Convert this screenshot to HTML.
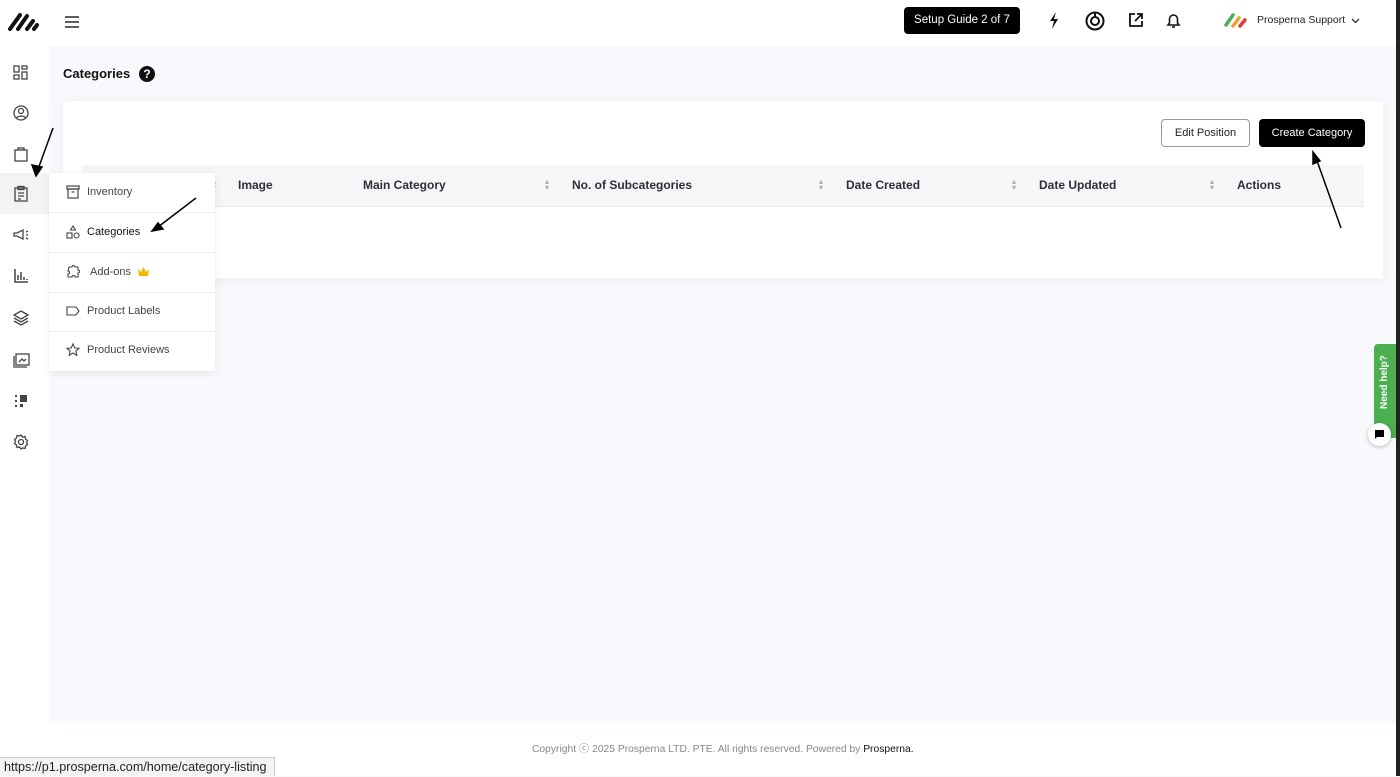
<!DOCTYPE html>
<html><head><meta charset="utf-8"><style>
*{box-sizing:border-box;margin:0;padding:0}
body{width:1400px;height:776px;overflow:hidden;background:#f8f9fc;font-family:"Liberation Sans",sans-serif;position:relative;color:#222}
.a{position:absolute}
.side{left:0;top:0;width:49px;height:776px;background:#fff}
.top{left:49px;top:0;width:1347px;height:46px;background:#fff}
.ic{position:absolute;left:12px;width:18px;height:18px}
svg{overflow:visible}
.card{left:63px;top:101px;width:1320px;height:177px;background:#fff;box-shadow:0 2px 12px rgba(0,0,0,.06)}
.th{left:82px;top:165px;width:1282px;height:42px;background:#f5f6f7;border-bottom:1px solid #e8e8e8}
.th span{position:absolute;top:13px;font-size:12px;font-weight:bold;color:#2b2f36}
.sort{position:absolute;top:14px;font-size:8px;color:#aaa;line-height:6px}
.menu{left:49px;top:173px;width:166px;height:198px;background:#fff;box-shadow:0 2px 8px rgba(0,0,0,.08)}
.mi{position:absolute;left:0;width:166px;height:40px;border-bottom:1px solid #eee;font-size:11px;color:#444}
.mi span{position:absolute;left:38px;top:13px}
.mi svg{position:absolute;left:17px;top:12px}
</style></head><body>
<div class="a side"></div>
<div class="a" style="left:0;top:173px;width:49px;height:41px;background:#f3f3f3"></div>
<div class="a top"></div>
<div class="a" style="left:1396px;top:0;width:4px;height:776px;background:#222"></div>
<svg class="a" style="left:8px;top:12px" width="30" height="20"><g stroke="#111" stroke-width="4" stroke-linecap="round"><line x1="2" y1="17" x2="12" y2="3"/><line x1="10" y1="17" x2="19" y2="4"/><line x1="19" y1="17" x2="25" y2="9"/><line x1="26" y1="17" x2="29" y2="13"/></g></svg>
<svg class="a" style="left:65px;top:16px" width="14" height="12"><g stroke="#333" stroke-width="1.6"><line x1="0" y1="1" x2="14" y2="1"/><line x1="0" y1="6" x2="14" y2="6"/><line x1="0" y1="11" x2="14" y2="11"/></g></svg>
<svg class="ic" style="top:64px" viewBox="0 0 18 18" fill="none" stroke="#444" stroke-width="1.3"><rect x="2" y="2" width="5" height="6"/><rect x="10" y="2" width="5" height="3"/><rect x="2" y="11" width="5" height="4"/><rect x="10" y="8" width="5" height="7"/></svg>
<svg class="ic" style="top:104px" viewBox="0 0 18 18" fill="none" stroke="#444" stroke-width="1.3"><circle cx="9" cy="9" r="7"/><circle cx="9" cy="7" r="2.5"/><path d="M4.5 14c1-2.5 8-2.5 9 0"/></svg>
<svg class="ic" style="top:145px" viewBox="0 0 18 18" fill="none" stroke="#444" stroke-width="1.3"><rect x="3" y="5" width="12" height="11"/><path d="M6 5V3h6v2"/></svg>
<svg class="ic" style="top:185px" viewBox="0 0 18 18" fill="none" stroke="#444" stroke-width="1.3"><rect x="3" y="3" width="12" height="13"/><rect x="6" y="1.5" width="6" height="3"/><path d="M6 8h6M6 11h6M6 14h3"/></svg>
<svg class="ic" style="top:226px" viewBox="0 0 18 18" fill="none" stroke="#444" stroke-width="1.3"><path d="M2 7h3l6-3v9l-6-3H2z"/><path d="M14 6l2-1M14 9h2M14 12l2 1"/></svg>
<svg class="ic" style="top:267px" viewBox="0 0 18 18" fill="none" stroke="#444" stroke-width="1.5"><path d="M3 2v13h13M6 13V8M9 13V5M12 13v-3M15 13v-1"/></svg>
<svg class="ic" style="top:309px" viewBox="0 0 18 18" fill="none" stroke="#444" stroke-width="1.3"><path d="M9 2l7 4-7 4-7-4z"/><path d="M2 9l7 4 7-4M2 12l7 4 7-4"/></svg>
<svg class="ic" style="top:351px" viewBox="0 0 18 18" fill="none" stroke="#444" stroke-width="1.3"><rect x="4" y="3" width="13" height="11"/><path d="M2 5v11h13M7 11l3-3 2 2 2-2"/></svg>
<svg class="ic" style="top:392px" viewBox="0 0 18 18" fill="#444"><rect x="3" y="3" width="2" height="2"/><rect x="3" y="8" width="2" height="2"/><rect x="3" y="13" width="2" height="2"/><rect x="8" y="3" width="7" height="7"/><rect x="8" y="12" width="3" height="3"/></svg>
<svg class="ic" style="top:433px" viewBox="0 0 18 18" fill="none" stroke="#444" stroke-width="1.3"><circle cx="9" cy="9" r="2.5"/><path d="M9 2l1.5 2 2.5-.5.5 2.5 2 1.5-1 2 1 2-2 1.5-.5 2.5-2.5-.5L9 16l-1.5-2-2.5.5-.5-2.5-2-1.5 1-2-1-2 2-1.5.5-2.5 2.5.5z"/></svg>
<div class="a" style="left:904px;top:7px;width:116px;height:27px;background:#000;border-radius:4px;color:#fff;font-size:11.5px;text-align:center;line-height:27px">Setup Guide 2 of 7</div>
<svg class="a" style="left:1048px;top:12px" width="12" height="17"><path d="M8 0L2 9h4l-2 8 6-10H6z" fill="#111"/></svg>
<svg class="a" style="left:1085px;top:11px" width="20" height="20" fill="none" stroke="#111" stroke-width="2"><circle cx="10" cy="10" r="8.5"/><circle cx="10" cy="10" r="4"/><path d="M10 1.5v4.5"/></svg>
<svg class="a" style="left:1128px;top:12px" width="16" height="16" fill="none" stroke="#111" stroke-width="1.8"><path d="M7 2H2v12h12V9M9 2h5v5M14 2L7 9"/></svg>
<svg class="a" style="left:1166px;top:12px" width="15" height="17" fill="none" stroke="#111" stroke-width="1.6"><path d="M2 13h11l-1.5-2V7a4 4 0 0 0-8 0v4z"/><path d="M6 15h3"/></svg>
<svg class="a" style="left:1224px;top:12px" width="26" height="16" stroke-width="3.5" stroke-linecap="round"><line x1="2" y1="13" x2="9" y2="3" stroke="#4caf50"/><line x1="9" y1="14" x2="15" y2="6" stroke="#f0a030"/><line x1="16" y1="14" x2="21" y2="8" stroke="#e53935"/></svg>
<div class="a" style="left:1257px;top:14px;font-size:10.5px;color:#222">Prosperna Support</div>
<svg class="a" style="left:1351px;top:18px" width="9" height="6" fill="none" stroke="#333" stroke-width="1.3"><path d="M1 1l3.5 3.5L8 1"/></svg>
<div class="a" style="left:63px;top:66px;font-size:13px;font-weight:bold;color:#111">Categories</div>
<div class="a" style="left:139px;top:66px;width:16px;height:16px;border-radius:50%;background:#111;color:#fff;font-size:12px;font-weight:bold;text-align:center;line-height:16px">?</div>
<div class="a card"></div>
<div class="a" style="left:1161px;top:119px;width:89px;height:28px;border:1px solid #999;border-radius:4px;background:#fff;font-size:11px;text-align:center;line-height:26px;color:#222">Edit Position</div>
<div class="a" style="left:1259px;top:119px;width:106px;height:28px;border-radius:4px;background:#000;color:#fff;font-size:11px;text-align:center;line-height:28px">Create Category</div>
<div class="a th">
<div class="sort" style="left:130px">▴<br>▾</div>
<span style="left:156px">Image</span>
<span style="left:281px">Main Category</span><div class="sort" style="left:463px">▴<br>▾</div>
<span style="left:490px">No. of Subcategories</span><div class="sort" style="left:737px">▴<br>▾</div>
<span style="left:764px">Date Created</span><div class="sort" style="left:930px">▴<br>▾</div>
<span style="left:957px">Date Updated</span><div class="sort" style="left:1128px">▴<br>▾</div>
<span style="left:1155px">Actions</span>
</div>
<div class="a menu">
<div class="mi" style="top:0"><svg width="14" height="14" fill="none" stroke="#444" stroke-width="1.2"><rect x="1" y="1" width="12" height="3"/><rect x="2" y="4" width="10" height="9"/><path d="M5.5 7h3"/></svg><span>Inventory</span></div>
<div class="mi" style="top:40px"><svg width="14" height="14" fill="none" stroke="#444" stroke-width="1.1"><path d="M7 1l2.5 4h-5z"/><rect x="1" y="8" width="5" height="5"/><circle cx="10.5" cy="10.5" r="2.5"/></svg><span style="color:#111">Categories</span></div>
<div class="mi" style="top:80px"><svg width="14" height="14" fill="none" stroke="#444" stroke-width="1.1"><path d="M3 2h3a1.5 1.5 0 0 1 3 0h3v3a1.5 1.5 0 0 1 0 3v4H9a1.5 1.5 0 0 0-3 0H2V9a1.5 1.5 0 0 0 0-3z"/></svg><span style="left:41px">Add-ons</span><svg style="left:88px;top:13px" width="13" height="11"><path d="M1 3l3 3 2.5-5L9 6l3-3-1 7H2z" fill="#f5b800"/></svg></div>
<div class="mi" style="top:119px"><svg width="14" height="14" fill="none" stroke="#444" stroke-width="1.1"><path d="M1 3h9l3 4-3 4H1z"/></svg><span>Product Labels</span></div>
<div class="mi" style="top:158px;border:none"><svg width="14" height="14" fill="none" stroke="#444" stroke-width="1.1"><path d="M7 1l1.8 4 4.2.3-3.2 2.8 1 4.2L7 10l-3.8 2.3 1-4.2L1 5.3 5.2 5z"/></svg><span>Product Reviews</span></div>
</div>
<svg class="a" style="left:0;top:0" width="1400" height="776" fill="none" stroke="#000" stroke-width="1.5">
<line x1="53" y1="128" x2="37" y2="172"/><path d="M32 165l4 11 6-9z" fill="#000"/>
<line x1="196" y1="198" x2="158" y2="227"/><path d="M152 231l11-2-5-6z" fill="#000"/>
<line x1="1341" y1="228" x2="1316" y2="158"/><path d="M1313 152l0 12 7-3z" fill="#000"/>
</svg>
<div class="a" style="left:1374px;top:344px;width:22px;height:94px;background:#4caf50;border-radius:4px 0 0 4px"></div>
<div class="a" style="left:1366px;top:382px;width:40px;height:14px;transform:rotate(-90deg);color:#fff;font-size:10px;font-weight:bold;text-align:center;white-space:nowrap">Need help?</div>
<div class="a" style="left:1368px;top:423px;width:23px;height:23px;border-radius:50%;background:#fff;box-shadow:0 1px 4px rgba(0,0,0,.25)"></div>
<svg class="a" style="left:1375px;top:430px" width="10" height="10"><path d="M0 0h9v7H2L0 9z" fill="#000"/></svg>
<div class="a" style="left:49px;top:723px;width:1347px;height:53px;background:#fff"></div>
<div class="a" style="left:532px;top:740px;font-size:10.3px;color:#888">Copyright ⓒ 2025 Prosperna LTD. PTE. All rights reserved. Powered by <span style="color:#111">Prosperna.</span></div>
<div class="a" style="left:0;top:757px;width:275px;height:19px;background:#f4f4f4;border:1px solid #ccc;border-left:none;border-bottom:none;font-size:12.6px;color:#222;line-height:19px;padding-left:4px">https://p1.prosperna.com/home/category-listing</div>
</body></html>
